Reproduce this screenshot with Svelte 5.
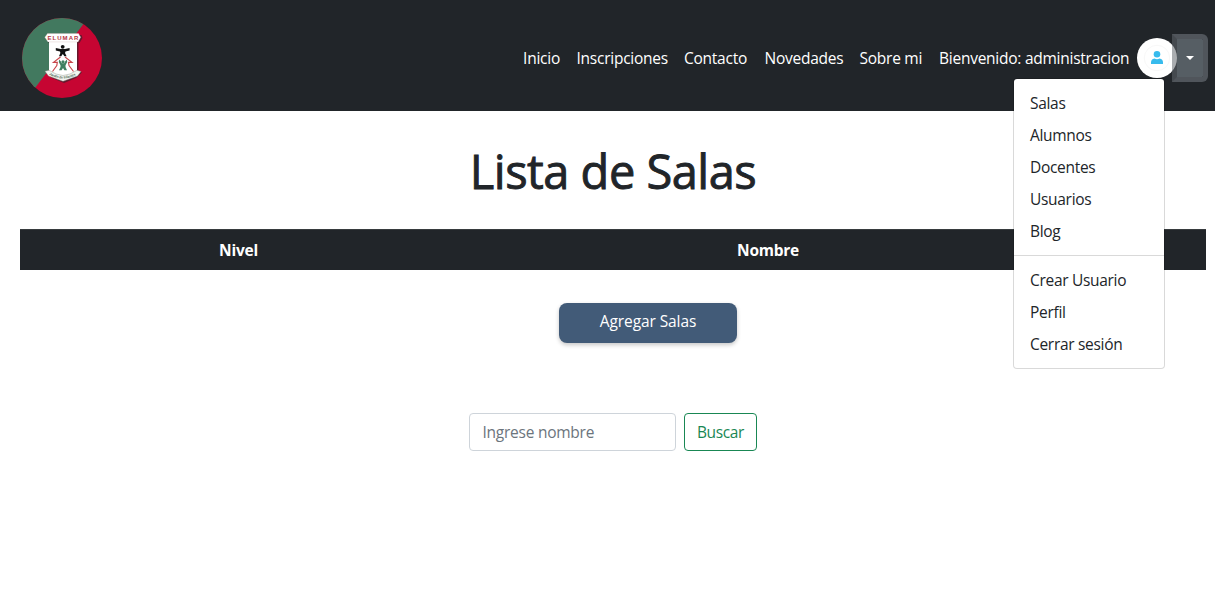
<script>
  const links = [
    { text: 'Inicio', width: 38 },
    { text: 'Inscripciones', width: 91.5 },
    { text: 'Contacto', width: 64.5 },
    { text: 'Novedades', width: 79 },
    { text: 'Sobre mi', width: 63.5 },
    { text: 'Bienvenido: administracion', width: 190 }
  ];
  const sections = ['Salas', 'Alumnos', 'Docentes', 'Usuarios', 'Blog'];
  const account = ['Crear Usuario', 'Perfil', 'Cerrar sesión'];
</script>

<header>
  <svg class="logo" viewBox="0 0 80 80" width="80" height="80" aria-label="Elumar">
    <defs><clipPath id="disc"><circle cx="40" cy="40" r="40" /></clipPath></defs>
    <g clip-path="url(#disc)">
      <rect width="80" height="80" fill="#c60532" />
      <path d="M0 0H66L10 74L0 80Z" fill="#42795f" />
    </g>
    <path d="M26 17H59.5L60.5 20L57.5 25H56.5V53L60 54.5L54 60L42 65L30 60L25 55L28 53V25H26Z" fill="#25252a" opacity=".6" />
    <path d="M27 23H55V54L41 62L27 54Z" fill="#fff" />
    <path d="M25.5 15.5H56.5L58.7 19.3L56 23.9H26L22.8 19.3Z" fill="#fff" stroke="#c9aaa6" stroke-width=".3" />
    <text x="25.4" y="21.9" font-size="6" textLength="31" fill="#b3343d">ELUMAR</text>
    <circle cx="40.7" cy="28.8" r="1.9" fill="#111" />
    <path d="M33.8 30L38.5 31H43L47.6 30V32.4L43.5 33.5L43 35L44.6 38.3H42.4L40.8 36L39.2 38.3H37L38.4 35L38 33.5L33.8 32.4Z" fill="#111" />
    <path d="M38.5 39L31.5 44.3H35.3L34.8 47.5L30.5 53.5M43 39L50 44.3H46.5L47 47.5L51.5 53.5" fill="none" stroke="#c8464b" stroke-width="1.15" />
    <circle cx="41" cy="43.8" r="1.6" fill="#3f8060" />
    <path d="M37.2 41.5L38.9 43.4L39.8 45.3H42.2L43.1 43.4L44.8 41.5L45.2 44L43.5 47.2V49L45 52.2H42.4L41 50L39.6 52.2H37L38.5 49V47.2L36.8 44Z" fill="#3f8060" />
    <path d="M23 53.2L27 52.3L34 56L41 57.5L48 56L55 52.3L59 53.5L55.5 58L41 63.3L26.5 58Z" fill="#f2f4ef" stroke="#849087" stroke-width=".4" />
    <path id="ribbon" d="M27 56.5Q41 64.5 55.5 56.3" fill="none" />
    <text font-size="3.5" fill="#56705f"><textPath href="#ribbon" textLength="28">Jardín de Infantes</textPath></text>
  </svg>
  <nav>
    {#each links as link}
      <a href="#top" style:width="{link.width}px">{link.text}</a>
    {/each}
  </nav>
  <div class="user">
    <svg class="avatar" viewBox="0 0 40 40" width="40" height="40">
      <circle cx="20" cy="20" r="20" fill="#fff" />
      <circle cx="20" cy="20" r="12.7" fill="none" stroke="#f3f3f3" stroke-width=".7" />
      <circle cx="20" cy="16.2" r="3.3" fill="#37bbed" />
      <path d="M14 26V24.5Q14 21 17.5 20.5Q20 22 22.5 20.5Q26 21 26 24.5V26Z" fill="#37bbed" />
    </svg>
    <button class="toggle" aria-label="Menú"><i></i></button>
    <div class="menu">
      {#each sections as item}<a href="#top">{item}</a>{/each}
      <hr />
      {#each account as item}<a href="#top">{item}</a>{/each}
    </div>
  </div>
</header>

<main>
  <h1>Lista de Salas</h1>
  <table>
    <thead><tr><th class="level">Nivel</th><th class="name">Nombre</th><th></th></tr></thead>
  </table>
  <button class="add">Agregar Salas</button>
  <form>
    <input placeholder="Ingrese nombre" />
    <button type="button" class="search">Buscar</button>
  </form>
</main>

<style>
  :global(body) { background: #fff; color: #212529; }
  header, main, button, input {
    font-family: 'Segoe UI', 'Open Sans', 'Noto Sans', sans-serif;
    font-size: 15.5px;
    line-height: 24px;
    letter-spacing: -0.25px;
    box-sizing: border-box;
  }
  a { color: inherit; text-decoration: none; white-space: nowrap; }
  header { height: 111px; background: #212529; color: #fff; display: flex; align-items: center; padding: 5px 7px 0 22px; }
  .logo { flex: none; }
  .logo text { font-family: 'Liberation Sans', sans-serif; font-weight: bold; letter-spacing: 0; }
  nav { display: flex; gap: 16px; margin-left: auto; }
  nav a:first-child { text-indent: .6px; }
  .user { position: relative; display: flex; align-items: center; margin-left: 8px; }
  .avatar { display: block; }
  .toggle {
    width: 36px; height: 48px; margin: 0 0 0 -5px; padding: 0; position: relative;
    background: #565e64; background-clip: padding-box;
    border: 5px solid #50555b; border-left-color: rgba(100, 106, 112, .55);
    border-radius: 0 6px 6px 0; display: flex; align-items: center; justify-content: center;
  }
  .toggle i { border: 4.8px solid transparent; border-top-color: #fff; border-bottom: 0; }
  .menu {
    position: absolute; z-index: 2; right: 43px; top: 44px; width: 152px; height: 291px;
    box-sizing: border-box; padding: 8px 0; background: #fff; background-clip: padding-box;
    border: 1px solid rgba(0, 0, 0, .15); border-radius: 4px; color: #212529;
  }
  .menu a { display: block; padding: 4px 16px; letter-spacing: -.3px; }
  hr { margin: 8px 0; border: 0; border-top: 1px solid #d9d9d9; }
  main { display: flex; flex-direction: column; padding: 31px 9px 0 20px; }
  h1 { margin: 0; align-self: center; font-size: 47px; line-height: 58px; font-weight: 500; letter-spacing: -.5px; white-space: nowrap; -webkit-text-stroke: .9px #212529; }
  table { width: 1186px; margin-top: 29px; table-layout: fixed; border-collapse: collapse; background: #212529; color: #fff; }
  th { height: 40px; padding: 1px 0 0; box-sizing: border-box; border-top: 1px solid #373b3e; font-weight: 700; }
  .level { width: 437px; }
  .name { width: 622px; }
  .add { width: 178px; height: 40px; margin: 33px 0 0 539px; padding: 0 0 3px; border: 0; border-radius: 8px; background: #425b78; color: #fff; letter-spacing: -.1px; box-shadow: 0 2px 4px rgba(0, 0, 0, .22); }
  form { display: flex; gap: 8px; margin: 70px 0 0 449px; }
  input { width: 207px; height: 38px; padding: 6px 12.5px; border: 1px solid #ced4da; border-radius: 4px; background: #fff; }
  input::placeholder { color: #6c757d; opacity: 1; }
  .search { width: 73px; height: 38px; padding: 0; border: 1px solid #198754; border-radius: 4px; background: #fff; color: #198754; letter-spacing: -.35px; }
</style>
